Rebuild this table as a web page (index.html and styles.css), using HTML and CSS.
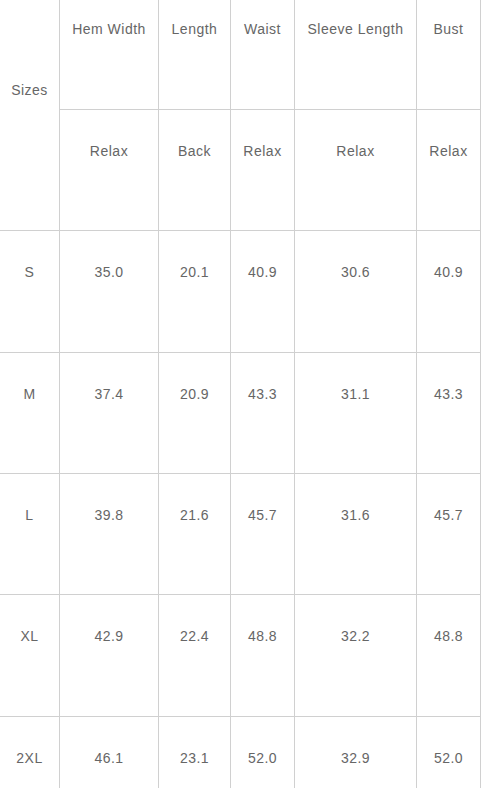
FILE: index.html
```html
<!DOCTYPE html>
<html lang="en">
<head>
<meta charset="utf-8">
<title>Size Chart</title>
<link rel="stylesheet" href="styles.css">
</head>
<body>
<table class="size-table">
  <colgroup>
    <col class="c-size">
    <col class="c-hem">
    <col class="c-len">
    <col class="c-waist">
    <col class="c-sleeve">
    <col class="c-bust">
  </colgroup>
  <thead>
    <tr class="row-head">
      <th rowspan="2" class="cell-sizes">Sizes</th>
      <th>Hem Width</th>
      <th>Length</th>
      <th>Waist</th>
      <th>Sleeve Length</th>
      <th>Bust</th>
    </tr>
    <tr class="row-sub">
      <th>Relax</th>
      <th>Back</th>
      <th>Relax</th>
      <th>Relax</th>
      <th>Relax</th>
    </tr>
  </thead>
  <tbody>
    <tr class="row-a"><td>S</td><td>35.0</td><td>20.1</td><td>40.9</td><td>30.6</td><td>40.9</td></tr>
    <tr class="row-b"><td>M</td><td>37.4</td><td>20.9</td><td>43.3</td><td>31.1</td><td>43.3</td></tr>
    <tr class="row-b"><td>L</td><td>39.8</td><td>21.6</td><td>45.7</td><td>31.6</td><td>45.7</td></tr>
    <tr class="row-a"><td>XL</td><td>42.9</td><td>22.4</td><td>48.8</td><td>32.2</td><td>48.8</td></tr>
    <tr class="row-a"><td>2XL</td><td>46.1</td><td>23.1</td><td>52.0</td><td>32.9</td><td>52.0</td></tr>
  </tbody>
</table>
</body>
</html>
```
FILE: styles.css
```css
html, body {
  margin: 0;
  padding: 0;
  background: #ffffff;
}
body {
  font-family: "Liberation Sans", Arial, sans-serif;
  font-size: 14px;
  color: #666666;
  overflow: hidden;
}
.size-table {
  border-collapse: collapse;
  table-layout: fixed;
  width: 482px;
  margin: -1px 0 0 -1px;
}
.c-size { width: 60px; }
.c-hem { width: 99px; }
.c-len { width: 72px; }
.c-waist { width: 64px; }
.c-sleeve { width: 122px; }
.c-bust { width: 64px; }
.size-table th,
.size-table td {
  border: 1px solid #d0d0d0;
  padding: 0;
  text-align: center;
  vertical-align: top;
  font-weight: normal;
  line-height: 16px;
  letter-spacing: 0.5px;
}
.row-head th { height: 110px; padding-top: 21px; box-sizing: border-box; }
.row-head th.cell-sizes { padding-top: 82px; }
.row-sub th { height: 121px; padding-top: 33px; box-sizing: border-box; }
.row-a td { height: 122px; padding-top: 33px; box-sizing: border-box; }
.row-b td { height: 121px; padding-top: 33px; box-sizing: border-box; }
```
